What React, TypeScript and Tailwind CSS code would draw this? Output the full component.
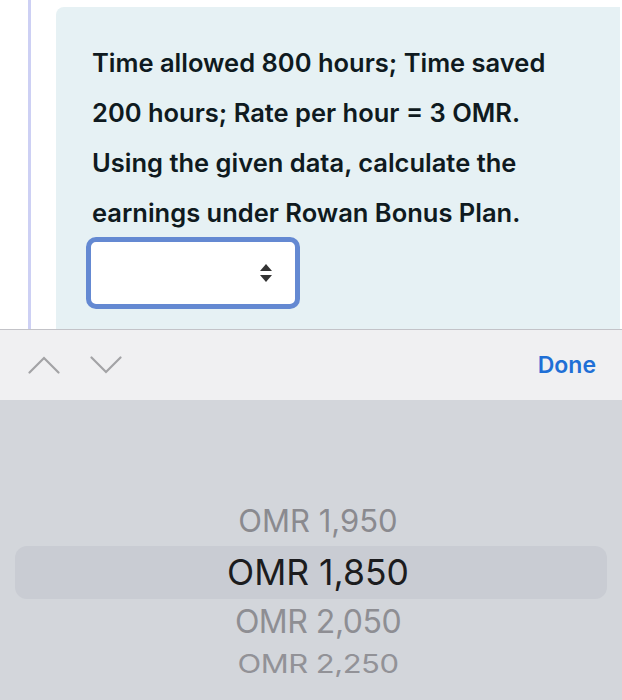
export default function App() {
  const lines = [
    'Time allowed 800 hours; Time saved',
    '200 hours; Rate per hour = 3 OMR.',
    'Using the given data, calculate the',
    'earnings under Rowan Bonus Plan.',
  ];

  return (
    <div className="w-[622px] h-[700px] overflow-hidden flex flex-col bg-white font-['Inter',sans-serif]">
      {/* Question area */}
      <div className="h-[329px] flex shrink-0">
        <div className="w-[28px] bg-white" />
        <div className="w-[3px] bg-[#cdd0f4]" />
        <div className="w-[25px] bg-white" />
        <div className="flex-1 mt-[7px] bg-[#e6f1f4] rounded-tl-lg pl-[36px] pt-[31px]">
          {lines.map((l) => (
            <p key={l} className="text-[25.5px] leading-[50px] font-semibold text-[#0f1a20] whitespace-nowrap">
              {l}
            </p>
          ))}
          <div className="-mt-[1px] -ml-[6px] w-[214px] h-[72px] border-[5px] border-[#6489d2] rounded-[10px] bg-white flex items-center justify-end pr-[23px]">
            <svg width="12" height="19" viewBox="0 0 12 19">
              <path d="M6 0 L12 7 L0 7 Z" fill="#333" />
              <path d="M0 11 L12 11 L6 18 Z" fill="#333" />
            </svg>
          </div>
        </div>
        <div className="w-[2px] bg-white" />
      </div>

      {/* Keyboard toolbar */}
      <div className="h-[71px] shrink-0 bg-[#f0f0f2] border-t border-[#c3c3c8] flex items-center px-[28px]">
        <svg width="32" height="18" viewBox="0 0 32 18" className="mr-[30px]">
          <path d="M1.5 16.5 L16 2 L30.5 16.5" fill="none" stroke="#a3a3a6" strokeWidth="2.2" strokeLinecap="round" />
        </svg>
        <svg width="32" height="18" viewBox="0 0 32 18">
          <path d="M1.5 1.5 L16 16 L30.5 1.5" fill="none" stroke="#a3a3a6" strokeWidth="2.2" strokeLinecap="round" />
        </svg>
        <span className="ml-auto mr-[-2px] text-[23px] font-semibold text-[#1f6fd6]">Done</span>
      </div>

      {/* Picker wheel */}
      <div className="flex-1 bg-[#d3d6db] pt-[96px] px-[15px]">
        <div className="h-[50px] pl-[14px] flex items-center justify-center text-[31px] text-[#8a8a8f]">
          OMR 1,950
        </div>
        <div className="h-[53px] pl-[14px] rounded-[12px] bg-[#c9ccd3] flex items-center justify-center text-[35.5px] text-[#1c1c1e]">
          OMR 1,850
        </div>
        <div className="h-[46px] pl-[14px] flex items-center justify-center text-[32px] text-[#8e8e93] tracking-[-0.5px]">
          OMR 2,050
        </div>
        <div className="h-[38px] pl-[14px] flex items-center justify-center text-[31px] text-[#929297] tracking-[-0.5px] scale-y-[0.82]">
          OMR 2,250
        </div>
      </div>
    </div>
  );
}
